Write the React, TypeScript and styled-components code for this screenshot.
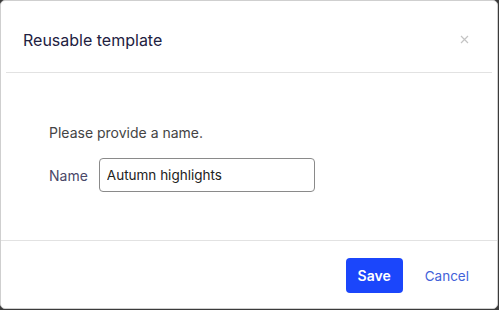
import React from "react";
import styled, { createGlobalStyle } from "styled-components";

const Global = createGlobalStyle`
  html, body { margin: 0; padding: 0; background: #3b3b3b; }
  body { font-family: Inter, "Noto Sans", sans-serif; }
`;

const Dialog = styled.div`
  width: 496px;
  height: 307px;
  background: #fff;
  border: 1px solid #cfcfcf;
  border-radius: 5px;
  display: flex;
  flex-direction: column;
  overflow: hidden;
`;

const Header = styled.div`
  height: 72px;
  margin: 0 5px;
  padding: 6px 17px 0;
  border-bottom: 1px solid #e2e2e2;
  display: flex;
  align-items: center;
  justify-content: space-between;
  box-sizing: border-box;
`;

const Title = styled.h2`
  margin: 0;
  font-size: 16px;
  font-weight: 400;
  color: #22213f;
`;

const Close = styled.button`
  border: none;
  background: none;
  padding: 0;
  margin-right: 5px;
  width: 12px;
  height: 12px;
  display: flex;
  align-items: center;
  justify-content: center;
  cursor: pointer;
`;

const Body = styled.div`
  flex: 1;
  padding: 51px 48px 0;
  border-bottom: 1px solid #e2e2e2;
  display: flex;
  flex-direction: column;
  gap: 17px;
`;

const Hint = styled.p`
  margin: 0;
  font-size: 14px;
  color: #444;
`;

const Row = styled.div`
  display: flex;
  align-items: center;
  gap: 11px;
`;

const Label = styled.label`
  font-size: 14px;
  color: #4a4868;
`;

const Input = styled.input`
  width: 216px;
  height: 34px;
  box-sizing: border-box;
  border: 1px solid #8a8a8a;
  border-radius: 4px;
  padding: 0 7px;
  font-family: Inter, "Noto Sans", sans-serif;
  font-size: 13.5px;
  color: #222;
  outline: none;
`;

const Footer = styled.div`
  height: 67px;
  display: flex;
  align-items: center;
  justify-content: flex-end;
  padding: 2px 28px 0 0;
  gap: 22px;
  box-sizing: border-box;
`;

const Button = styled.button<{ $primary?: boolean }>`
  font-family: Inter, "Noto Sans", sans-serif;
  font-size: ${(p) => (p.$primary ? "14px" : "13.5px")};
  border: none;
  border-radius: 4px;
  cursor: pointer;
  height: 35px;
  padding: 0 ${(p) => (p.$primary ? "12px" : "0")};
  background: ${(p) => (p.$primary ? "#1b46fb" : "transparent")};
  color: ${(p) => (p.$primary ? "#fff" : "#4262d9")};
  font-weight: ${(p) => (p.$primary ? 600 : 400)};
`;

export default function App() {
  return (
    <>
      <Global />
      <Dialog>
        <Header>
          <Title>Reusable template</Title>
          <Close aria-label="Close">
            <svg width="9" height="9" viewBox="0 0 9 9">
              <path d="M1 1L8 8M8 1L1 8" stroke="#c4c4c4" strokeWidth="1.2" />
            </svg>
          </Close>
        </Header>
        <Body>
          <Hint>Please provide a name.</Hint>
          <Row>
            <Label>Name</Label>
            <Input defaultValue="Autumn highlights" />
          </Row>
        </Body>
        <Footer>
          <Button $primary>Save</Button>
          <Button>Cancel</Button>
        </Footer>
      </Dialog>
    </>
  );
}
